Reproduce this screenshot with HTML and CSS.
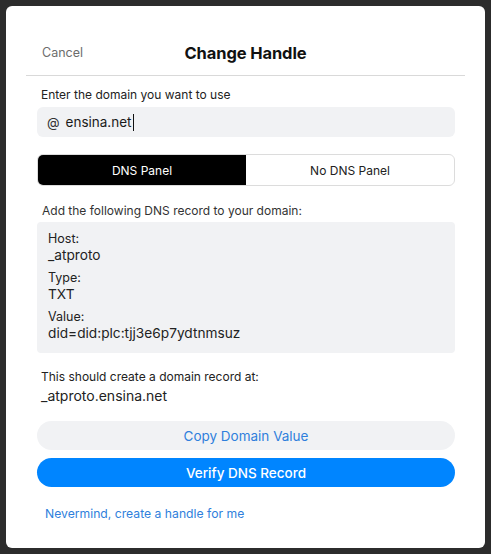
FILE: index.html
```html
<!DOCTYPE html>
<html>
<head>
<meta charset="utf-8">
<link rel="stylesheet" href="styles.css">
</head>
<body>
<div class="modal">
  <div class="header">
    <span class="cancel">Cancel</span>
    <span class="title">Change Handle</span>
    <span></span>
  </div>
  <div class="content">
    <div class="label">Enter the domain you want to use</div>
    <div class="input"><span class="at">@</span><span class="val">ensina.net</span><span class="caret"></span></div>
    <div class="segment">
      <div class="seg active">DNS Panel</div>
      <div class="seg">No DNS Panel</div>
    </div>
    <div class="label label2">Add the following DNS record to your domain:</div>
    <div class="record">
      <div class="rlabel">Host:</div>
      <div class="rval">_atproto</div>
      <div class="rlabel">Type:</div>
      <div class="rval">TXT</div>
      <div class="rlabel">Value:</div>
      <div class="rval">did=did:plc:tjj3e6p7ydtnmsuz</div>
    </div>
    <div class="label label3">This should create a domain record at:</div>
    <div class="domain">_atproto.ensina.net</div>
    <div class="btn copy">Copy Domain Value</div>
    <div class="btn verify">Verify DNS Record</div>
    <div class="link">Nevermind, create a handle for me</div>
  </div>
</div>
</body>
</html>
```
FILE: styles.css
```css
html, body {
  margin: 0;
  padding: 0;
  background: #2c2c2c;
  font-family: Inter, "Noto Sans", sans-serif;
}
body {
  width: 491px;
  height: 554px;
  padding: 6px 6px 0 6px;
  box-sizing: border-box;
}
.modal {
  width: 479px;
  height: 542px;
  background: #fff;
  border-radius: 6px;
  overflow: hidden;
}
.header {
  display: grid;
  grid-template-columns: 1fr auto 1fr;
  align-items: center;
  margin: 0 20px;
  padding: 37px 0 12px 0;
  border-bottom: 1px solid #d9d9d9;
  line-height: 20px;
}
.cancel {
  font-size: 12.5px;
  color: #6d6d6d;
  padding-left: 16px;
}
.title {
  font-size: 16.5px;
  font-weight: 700;
  color: #111;
  letter-spacing: -0.1px;
}
.content {
  padding: 0 30px 0 31px;
}
.label {
  margin-top: 10px;
  padding-left: 4px;
  font-size: 12px;
  line-height: 18px;
  color: #222;
}
.input {
  margin-top: 3px;
  height: 30px;
  background: #f1f2f4;
  border-radius: 6px;
  display: flex;
  align-items: center;
  padding-left: 10px;
  font-size: 13.5px;
  color: #1a1a1a;
}
.at {
  font-size: 13px;
  margin-right: 6px;
  color: #333;
}
.caret {
  display: inline-block;
  width: 1px;
  height: 17px;
  background: #111;
  margin-left: 1px;
}
.segment {
  margin-top: 17px;
  height: 32px;
  display: flex;
  border: 1px solid #dcdcdc;
  border-radius: 6px;
  overflow: hidden;
  box-sizing: border-box;
}
.seg {
  flex: 1;
  display: flex;
  align-items: center;
  justify-content: center;
  font-size: 12px;
  color: #222;
}
.seg.active {
  background: #000;
  color: #fff;
}
.label2 {
  margin-top: 16px;
  padding-left: 5px;
  color: #333;
}
.record {
  margin-top: 2px;
  background: #f1f2f4;
  border-radius: 4px;
  padding: 9px 11px 12px 11px;
  height: 131px;
  box-sizing: border-box;
}
.rlabel {
  font-size: 12.5px;
  line-height: 16px;
  color: #222;
}
.rlabel + .rval + .rlabel {
  margin-top: 7px;
}
.rval {
  font-size: 13.7px;
  line-height: 16px;
  color: #222;
}
.label3 {
  margin-top: 15px;
}
.domain {
  padding-left: 4px;
  font-size: 14px;
  line-height: 20px;
  color: #222;
}
.btn {
  height: 29px;
  border-radius: 15px;
  display: flex;
  align-items: center;
  justify-content: center;
  font-size: 13.5px;
}
.copy {
  margin-top: 15px;
  background: #f1f2f4;
  color: #2f7fdc;
}
.verify {
  margin-top: 8px;
  background: #0085ff;
  color: #fff;
  font-weight: 500;
}
.link {
  margin-top: 18px;
  padding-left: 8px;
  font-size: 12.2px;
  line-height: 18px;
  color: #2f7fdc;
}
```
